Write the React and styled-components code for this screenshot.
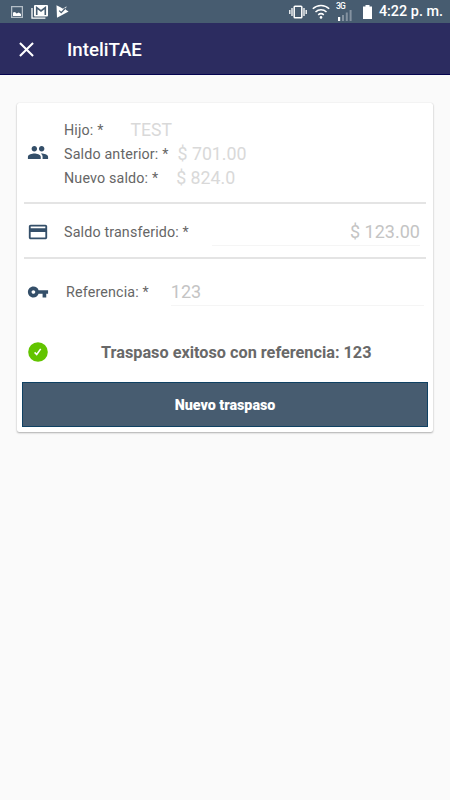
import React from 'react';
import styled, { createGlobalStyle } from 'styled-components';
import { MdClose, MdPeople, MdCreditCard, MdVpnKey } from 'react-icons/md';

const App = () => {
  return (
    <Screen>
      <GlobalStyle />
      <StatusBar />
      <Header>
        <CloseButton aria-label="Cerrar">
          <MdClose size={25} />
        </CloseButton>
        <Title>InteliTAE</Title>
      </Header>
      <Card>
        <ChildSection>
          <IconBox>
            <MdPeople size={23} />
          </IconBox>
          <Lines>
            <Line>
              <Label>Hijo: *</Label>
              <Value $gap={27} $size={17.6}>TEST</Value>
            </Line>
            <Line>
              <Label>Saldo anterior: *</Label>
              <Value $gap={9}>$ 701.00</Value>
            </Line>
            <Line>
              <Label>Nuevo saldo: *</Label>
              <Value $gap={18}>$ 824.0</Value>
            </Line>
          </Lines>
        </ChildSection>
        <Divider />
        <AmountSection>
          <IconBox>
            <MdCreditCard size={22} />
          </IconBox>
          <Label>Saldo transferido: *</Label>
          <AmountField>$ 123.00</AmountField>
        </AmountSection>
        <Divider />
        <ReferenceSection>
          <IconBox>
            <MdVpnKey size={22} />
          </IconBox>
          <Label $indent={2}>Referencia: *</Label>
          <ReferenceField>123</ReferenceField>
        </ReferenceSection>
        <Result>
          <CheckBadge />
          <Message>Traspaso exitoso con referencia: 123</Message>
        </Result>
        <Button>Nuevo traspaso</Button>
      </Card>
    </Screen>
  )
}

const StatusBar = () => (
  <Status>
    <Notifications>
      <svg width="12" height="12" viewBox="0 0 12 12">
        <rect x="0.6" y="0.6" width="10.8" height="10.8" fill="none" stroke="#b4bec7" strokeWidth="1.3" />
        <path d="M2 10V6.5l2-0.6 1.6 1.6L7.8 6.6 10 8v2z" fill="#fff" />
      </svg>
      <svg width="17" height="14" viewBox="0 0 17 14">
        <path d="M1 3v10.2h13.4" fill="none" stroke="#fff" strokeWidth="1.3" />
        <rect x="3" y="0" width="14" height="11.6" rx="1" fill="#fff" />
        <path d="M5.7 10V2.6L10 6l4.3-3.4V10" fill="none" stroke="#475c70" strokeWidth="1.6" />
      </svg>
      <svg width="13" height="13" viewBox="0 0 13 13">
        <path d="M0.5 0.3L4 2 7 3.8 10.5 1.2 9.7 4.8 12.6 6.6 1 12.8z" fill="#fff" />
        <path d="M3.2 5.6l2 2L9.6 3" fill="none" stroke="#475c70" strokeWidth="1.3" />
      </svg>
    </Notifications>
    <Indicators>
      <svg width="18" height="14" viewBox="0 0 18 14">
        <rect x="5.2" y="1.2" width="7.6" height="11.6" rx="0.8" fill="none" stroke="#fff" strokeWidth="1.5" />
        <path d="M3 3v8M15 3v8M0.8 5v4M17.2 5v4" fill="none" stroke="#fff" strokeWidth="1.3" />
      </svg>
      <Wifi width="18" height="15" viewBox="0 0 18 15">
        <path d="M0.8 4.8a11.8 11.8 0 0 1 16.4 0M3.5 8a8 8 0 0 1 11 0M6.2 10.9a4.2 4.2 0 0 1 5.6 0" fill="none" stroke="#fff" strokeWidth="1.5" />
        <circle cx="9" cy="13.4" r="1.3" fill="#fff" />
      </Wifi>
      <Signal>
        <Network>3G</Network>
        <svg width="14" height="11" viewBox="0 0 14 11">
          <rect x="0" y="7" width="2.2" height="4" fill="#fff" />
          <path d="M4 5h2v6H4zM7.8 2.6h2V11h-2zM11.6 0h2v11h-2z" fill="#8492a0" />
        </svg>
      </Signal>
      <Battery width="9" height="14" viewBox="0 0 9 14">
        <path d="M2.5 0h4v1.4H9V14H0V1.4h2.5z" fill="#fff" />
      </Battery>
      <Clock>4:22 p. m.</Clock>
    </Indicators>
  </Status>
)

const CheckBadge = () => (
  <Badge width="20" height="20" viewBox="0 0 20 20">
    <circle cx="10" cy="10" r="9.8" fill="#62c400" />
    <path d="M6.6 10.4l2.1 2.1 4-5.6" fill="none" stroke="#fff" strokeWidth="1.6" />
  </Badge>
)

const GlobalStyle = createGlobalStyle`
  body {
    margin: 0;
    background: #fafafa;
  }
  * {
    box-sizing: border-box;
  }
`

const Screen = styled.div`
  width: 450px;
  height: 800px;
  overflow: hidden;
  background: #fafafa;
  font-family: Roboto, sans-serif;
`

const Status = styled.div`
  display: flex;
  justify-content: space-between;
  height: 23px;
  padding: 0 7px 0 11px;
  background: #475c70;
  color: #fff;
`

const Notifications = styled.div`
  display: flex;
  align-items: center;
  gap: 8px;
`

const Indicators = styled.div`
  display: flex;
  align-items: center;
`

const Wifi = styled.svg`
  margin-left: 5px;
`

const Signal = styled.div`
  display: flex;
  flex-direction: column;
  width: 15px;
  height: 18px;
  margin-left: 8px;
`

const Network = styled.span`
  height: 7px;
  margin-left: -2px;
  font-size: 8.5px;
  font-weight: 500;
  letter-spacing: -0.6px;
  line-height: 7px;
`

const Battery = styled.svg`
  margin-left: 10px;
`

const Clock = styled.span`
  margin-left: 7px;
  font-size: 14.4px;
  font-weight: 500;
  line-height: 25px;
  white-space: nowrap;
`

const Header = styled.header`
  display: flex;
  align-items: center;
  height: 52px;
  padding-left: 14px;
  border-bottom: 1px solid #05034f;
  background: #2c2c60;
  color: #fff;
`

const CloseButton = styled.button`
  display: flex;
  padding: 1px 0 0;
  border: 0;
  background: none;
  color: inherit;
`

const Title = styled.h1`
  margin: 2px 0 0 28px;
  font-size: 18.7px;
  font-weight: 500;
  line-height: 24px;
`

const Card = styled.main`
  display: flex;
  flex-direction: column;
  width: 416px;
  height: 329px;
  margin: 28px 0 0 17px;
  padding: 0 5px 5px;
  border-radius: 2px;
  background: #fff;
  box-shadow: 0 1px 2px rgba(0, 0, 0, 0.3), 0 0 1px rgba(0, 0, 0, 0.15);
`

const Section = styled.section`
  display: flex;
  align-items: center;
  padding-left: 5px;
`

const ChildSection = styled(Section)`
  height: 99px;
`

const AmountSection = styled(Section)`
  height: 53px;
  padding-top: 3px;
`

const ReferenceSection = styled(Section)`
  height: 66px;
`

const IconBox = styled.div`
  display: flex;
  flex: none;
  justify-content: center;
  width: 22px;
  margin-right: 15px;
  color: #344f69;
`

const Lines = styled.div`
  display: flex;
  flex-direction: column;
  padding-top: 2px;
`

const Line = styled.div`
  display: flex;
  align-items: center;
  height: 24px;
`

const Label = styled.span`
  margin-left: ${({ $indent }) => $indent || 0}px;
  color: #666;
  font-size: 14.3px;
  letter-spacing: 0.15px;
  line-height: 20px;
  white-space: nowrap;
`

const Value = styled.span`
  margin-left: ${({ $gap }) => $gap}px;
  color: #d9d9d9;
  font-size: ${({ $size }) => $size || 17.8}px;
  line-height: 24px;
`

const Divider = styled.hr`
  flex: none;
  height: 2px;
  margin: 0 2px;
  border: 0;
  background: #e4e4e4;
`

const Field = styled.div`
  border-bottom: 1px solid #f5f5f5;
  color: #c4c4c4;
  font-size: 18px;
  line-height: 26px;
`

const AmountField = styled(Field)`
  width: 208px;
  margin-left: 23px;
  text-align: right;
`

const ReferenceField = styled(Field)`
  width: 253px;
  margin-left: 22px;
`

const Result = styled.div`
  display: flex;
  align-items: center;
  height: 54px;
  padding-left: 6px;
`

const Badge = styled.svg`
  flex: none;
`

const Message = styled.strong`
  margin-left: 53px;
  color: #696969;
  font-size: 16.25px;
  font-weight: 700;
  white-space: nowrap;
`

const Button = styled.button`
  flex: none;
  width: 406px;
  height: 45px;
  margin-top: auto;
  padding: 0;
  border: 1px solid #0f4163;
  background: #475c70;
  color: #fff;
  font-family: inherit;
  font-size: 14.3px;
  font-weight: 900;
`

export default App
